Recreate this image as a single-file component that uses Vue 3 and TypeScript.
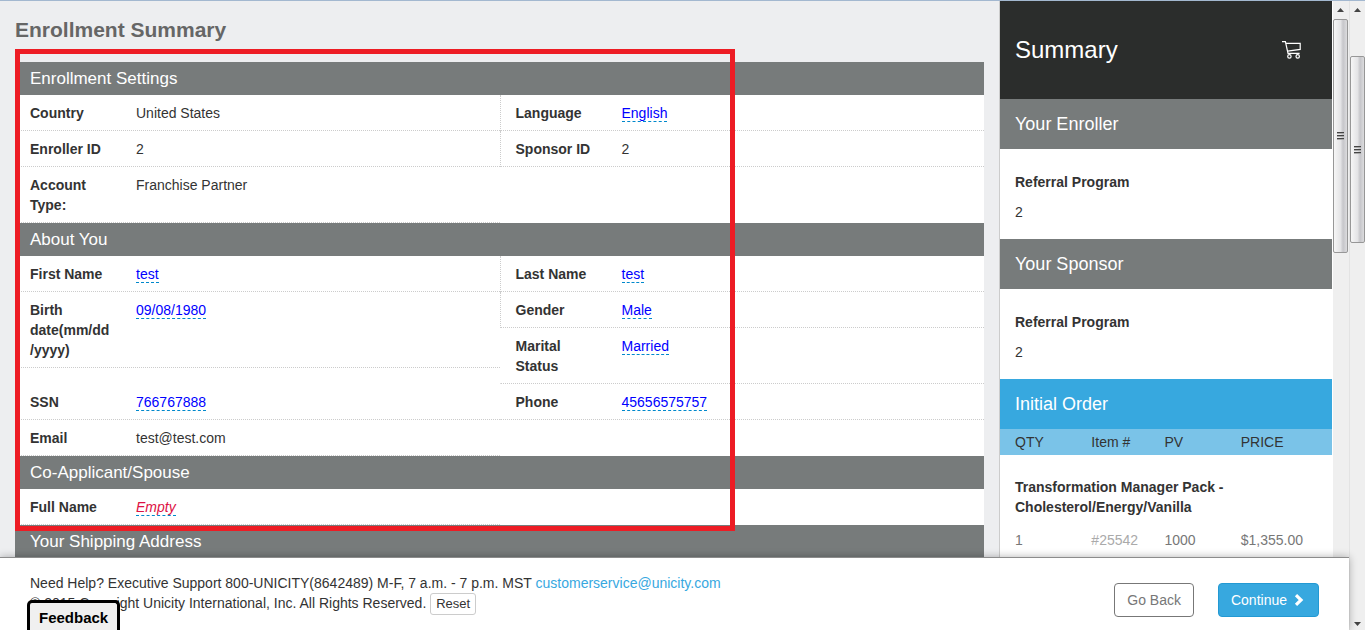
<script setup lang="ts">
interface Field {
  label: string
  value: string
  kind?: 'link' | 'empty'
  divided?: boolean
}
interface Pair {
  left: Field[]
  right: Field[]
}
interface Section {
  title: string
  pairs: Pair[]
}
interface OrderItem {
  name: string
  qty: number
  item: string
  pv: number
  price: string
}

const sections: Section[] = [
  {
    title: 'Enrollment Settings',
    pairs: [
      {
        left: [
          { label: 'Country', value: 'United States' },
          { label: 'Enroller ID', value: '2' },
          { label: 'Account\nType:', value: 'Franchise Partner' },
        ],
        right: [
          { label: 'Language', value: 'English', kind: 'link', divided: true },
          { label: 'Sponsor ID', value: '2', divided: true },
        ],
      },
    ],
  },
  {
    title: 'About You',
    pairs: [
      {
        left: [
          { label: 'First Name', value: 'test', kind: 'link' },
          { label: 'Birth\ndate(mm/dd\n/yyyy)', value: '09/08/1980', kind: 'link' },
        ],
        right: [
          { label: 'Last Name', value: 'test', kind: 'link', divided: true },
          { label: 'Gender', value: 'Male', kind: 'link', divided: true },
          { label: 'Marital\nStatus', value: 'Married', kind: 'link' },
        ],
      },
      {
        left: [{ label: 'SSN', value: '766767888', kind: 'link' }],
        right: [{ label: 'Phone', value: '45656575757', kind: 'link' }],
      },
      { left: [{ label: 'Email', value: 'test@test.com' }], right: [] },
    ],
  },
  {
    title: 'Co-Applicant/Spouse',
    pairs: [{ left: [{ label: 'Full Name', value: 'Empty', kind: 'empty' }], right: [] }],
  },
  { title: 'Your Shipping Address', pairs: [] },
]

const people = [
  { title: 'Your Enroller', name: 'Referral Program', id: '2' },
  { title: 'Your Sponsor', name: 'Referral Program', id: '2' },
]

const order: OrderItem[] = [
  {
    name: 'Transformation Manager Pack - Cholesterol/Energy/Vanilla',
    qty: 1,
    item: '#25542',
    pv: 1000,
    price: '$1,355.00',
  },
]
</script>

<template>
  <div class="page">
    <div class="frame">
      <div class="content">
        <main class="main">
          <h1>Enrollment Summary</h1>
          <section v-for="s in sections" :key="s.title" class="section">
            <h2>{{ s.title }}</h2>
            <div v-for="(p, i) in s.pairs" :key="i" class="pair">
              <dl v-for="(side, j) in [p.left, p.right]" :key="j" :class="['side', j ? 'right' : 'left']">
                <div v-for="f in side" :key="f.label" class="field" :class="{ divided: f.divided }">
                  <dt>{{ f.label }}</dt>
                  <dd>
                    <a v-if="f.kind" href="#" class="editable" :class="f.kind">{{ f.value }}</a>
                    <template v-else>{{ f.value }}</template>
                  </dd>
                </div>
              </dl>
            </div>
          </section>
          <div class="highlight"></div>
        </main>

        <aside class="summary">
          <header>
            <h2>Summary</h2>
            <svg width="21" height="20" viewBox="0 0 21 20" fill="none" stroke="#fff" stroke-width="1.2">
              <path d="M1 1.6h3.4L7 13.3h11.6" />
              <path d="M4.9 3.4h14.3v6L6.5 11.2" />
              <circle cx="8.4" cy="16.4" r="1.7" />
              <circle cx="16.7" cy="16.4" r="1.7" />
            </svg>
          </header>
          <section v-for="p in people" :key="p.title">
            <h3>{{ p.title }}</h3>
            <div class="person">
              <strong>{{ p.name }}</strong>
              <span>{{ p.id }}</span>
            </div>
          </section>
          <section>
            <h3 class="blue">Initial Order</h3>
            <table>
              <thead>
                <tr>
                  <th scope="col">QTY</th>
                  <th scope="col">Item #</th>
                  <th scope="col">PV</th>
                  <th scope="col">PRICE</th>
                </tr>
              </thead>
              <tbody v-for="o in order" :key="o.item">
                <tr>
                  <td colspan="4" class="product">{{ o.name }}</td>
                </tr>
                <tr>
                  <td>{{ o.qty }}</td>
                  <td class="sku">{{ o.item }}</td>
                  <td>{{ o.pv }}</td>
                  <td>{{ o.price }}</td>
                </tr>
              </tbody>
            </table>
          </section>
        </aside>

        <div class="scroll inner">
          <svg class="arrow" width="7" height="4" viewBox="0 0 7 4"><path d="M3.5 0L7 4H0z" fill="#444" /></svg>
          <div class="thumb"><i></i><i></i><i></i></div>
        </div>
      </div>

      <footer>
        <div class="help">
          <div>
            Need Help? Executive Support 800-UNICITY(8642489) M-F, 7 a.m. - 7 p.m. MST
            <a href="#">customerservice@unicity.com</a>
          </div>
          <div>
            © 2015 Copyright Unicity International, Inc. All Rights Reserved.
            <button type="button" class="reset">Reset</button>
          </div>
        </div>
        <div class="actions">
          <button type="button" class="back">Go Back</button>
          <button type="button" class="next">
            Continue
            <svg width="10" height="12" viewBox="0 0 10 12" fill="none" stroke="#fff" stroke-width="3.2">
              <path d="M2 1.2L7 6l-5 4.8" />
            </svg>
          </button>
        </div>
        <button type="button" class="feedback">Feedback</button>
      </footer>
    </div>

    <div class="scroll outer">
      <svg class="arrow" width="7" height="4" viewBox="0 0 7 4"><path d="M3.5 0L7 4H0z" fill="#444" /></svg>
      <div class="thumb"><i></i><i></i><i></i></div>
      <svg class="arrow down" width="7" height="4" viewBox="0 0 7 4"><path d="M0 0h7L3.5 4z" fill="#444" /></svg>
    </div>
  </div>
</template>

<style>
body {
  margin: 0;
  overflow: hidden;
}
</style>

<style scoped>
.page {
  box-sizing: border-box;
  height: 100vh;
  display: flex;
  border-top: 1px solid #a3b8d0;
  background: #edeef0;
  color: #333;
  font: 14px/20px "Liberation Sans", Arial, sans-serif;
}
.page * {
  box-sizing: border-box;
}
h1, h2, h3, dl, dd {
  margin: 0;
}
a {
  text-decoration: none;
}
button {
  font: inherit;
  cursor: pointer;
}
.frame {
  flex: 1;
  min-width: 0;
  display: flex;
  flex-direction: column;
}
.content {
  flex: 1;
  min-height: 0;
  display: flex;
  overflow: hidden;
}

.main {
  position: relative;
  flex: 1;
  min-width: 0;
  padding: 17px 15px 0;
}
h1 {
  margin-bottom: 20px;
  font-size: 21px;
  line-height: 24px;
  color: #666;
}
.section {
  background: #fff;
}
.section h2 {
  padding: 0 15px;
  font-size: 17px;
  font-weight: 400;
  line-height: 33px;
  color: #fff;
  background: #777b7b;
}
.pair {
  display: flex;
}
.side {
  width: 50%;
}
.left {
  align-self: flex-start;
}
.field {
  display: grid;
  grid-template-columns: 106px 1fr;
  padding: 8px 15px 7px;
  border-bottom: 1px dotted #ccc;
}
.right .field {
  border-left: 1px solid transparent;
}
.right .divided {
  border-left: 1px dotted #ccc;
}
dt {
  font-weight: 700;
  white-space: pre-line;
}
.editable {
  border-bottom: 1px dashed #08c;
}
.link {
  color: #00f;
}
.empty {
  color: #d14;
  font-style: italic;
}
.highlight {
  position: absolute;
  top: 48px;
  left: 15px;
  width: 720px;
  height: 482px;
  border: 5px solid #ed1c24;
  pointer-events: none;
}

.summary {
  flex: none;
  width: 333px;
  border-left: 1px solid #ccc;
  background: #fff;
}
.summary header {
  display: flex;
  align-items: center;
  justify-content: space-between;
  height: 98px;
  padding: 0 30px 0 15px;
  background: #2b2d2c;
  color: #fff;
}
.summary h2 {
  font-size: 24px;
  font-weight: 400;
  line-height: 28px;
}
.summary h3 {
  padding: 1px 15px 0;
  font-size: 18px;
  font-weight: 400;
  line-height: 49px;
  color: #fff;
  background: #777b7b;
}
.summary .blue {
  background: #37a8df;
}
.person {
  display: flex;
  flex-direction: column;
  gap: 10px;
  padding: 23px 15px 17px;
}
table {
  width: 100%;
  table-layout: fixed;
  border-collapse: collapse;
}
th {
  width: 23%;
  padding: 3px 0 3px 15px;
  font-weight: 400;
  text-align: left;
  background: #7ac3e8;
}
th:nth-child(2) {
  width: 22%;
}
th:last-child {
  width: 32%;
}
td {
  padding: 0 0 0 15px;
  color: #777;
}
td.product {
  padding: 22px 60px 13px 15px;
  font-weight: 700;
  color: #333;
}
td.sku {
  color: #aaa;
}

.scroll {
  flex: none;
  display: flex;
  flex-direction: column;
  align-items: center;
  background: #efefef;
}
.inner {
  width: 17px;
  padding: 0 1px 0 0;
  border-left: 1px solid #fff;
}
.outer {
  width: 16px;
  border-left: 1px solid #e3e3e3;
}
.arrow {
  flex: none;
  margin: 7px 0;
}
.thumb {
  flex: none;
  display: flex;
  flex-direction: column;
  align-items: center;
  justify-content: center;
  gap: 1px;
  width: 100%;
  border: 1px solid #979797;
  border-radius: 2px;
  background: linear-gradient(90deg, #f6f6f6, #e4e4e6 50%, #c6c6ca 70%, #dcdcde);
}
.inner .thumb {
  height: 234px;
}
.outer .thumb {
  height: 187px;
  margin-top: 37px;
}
.thumb i {
  width: 7px;
  height: 2px;
  border-top: 1px solid #444;
  background: #aaa;
}
.down {
  margin-top: auto;
  margin-bottom: 4px;
}

footer {
  position: relative;
  flex: none;
  display: flex;
  justify-content: space-between;
  min-height: 73px;
  padding: 15px 30px 0;
  border-top: 1px solid #8c8c8c;
  background: #fff;
  box-shadow: 0 0 8px rgba(0, 0, 0, 0.3);
}
.help a {
  color: #37a8df;
}
.reset {
  height: 22px;
  margin: -1px 0;
  padding: 0 5px;
  border: 1px solid #ccc;
  border-radius: 3px;
  background: #fff;
  color: #333;
  font-size: 13px;
  line-height: 18px;
}
.actions {
  display: flex;
  align-items: flex-start;
  gap: 24px;
  padding-top: 10px;
}
.back,
.next {
  display: flex;
  align-items: center;
  gap: 7px;
  height: 34px;
  padding: 0 12px;
  border: 1px solid #777;
  border-radius: 4px;
  background: #fff;
  color: #777;
}
.next {
  padding-right: 14px;
  border-color: #2399d3;
  background: #37a8df;
  color: #fff;
}
.feedback {
  position: absolute;
  left: 27px;
  bottom: 0;
  height: 30px;
  padding: 2px 9px 0;
  border: 3px solid #000;
  border-bottom: 0;
  border-radius: 5px 5px 0 0;
  background: #f0f0f0;
  color: #000;
  font-size: 15px;
  font-weight: 700;
}
</style>
